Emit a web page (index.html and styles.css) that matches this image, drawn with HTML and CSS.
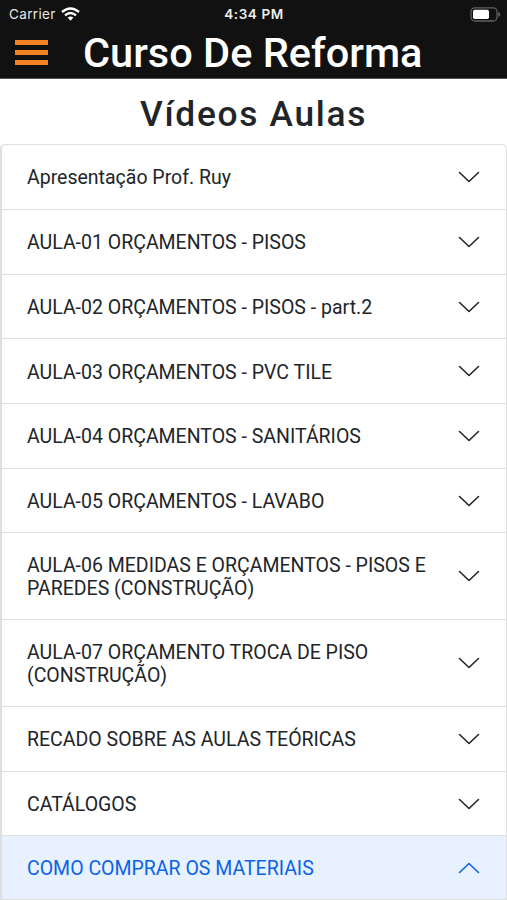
FILE: index.html
```html
<!DOCTYPE html>
<html lang="pt-BR">
<head>
<meta charset="utf-8">
<title>Curso De Reforma</title>
<link rel="stylesheet" href="styles.css">
</head>
<body>
<header class="top">
  <div class="status">
    <div class="carrier"><span>Carrier</span>
      <svg width="19" height="14" viewBox="0 0 19 14" fill="none" stroke="#fff" stroke-width="2.4"><path d="M1 5Q9.5-2.2 18 5M4 8.4Q9.500 3.800 15 8.400"/><path d="M9.500 13.700L6.600 10.600Q9.500 8.300 12.400 10.600Z" fill="#fff" stroke="none"/></svg>
    </div>
    <time class="clock">4:34 PM</time>
    <svg class="battery" width="31" height="15" viewBox="0 0 31 15"><rect x="1" y=".8" width="26" height="13.2" rx="3.8" fill="none" stroke="#606060" stroke-width="1.3"/><rect x="3" y="2.800" width="16" height="9.200" rx="1.800" fill="#fff"/><path d="M28.300 5Q30.300 5.500 30.300 7.400T28.300 9.800Z" fill="#606060"/></svg>
  </div>
  <div class="bar">
    <div class="menu"><i></i><i></i><i></i></div>
    <h1>Curso De Reforma</h1>
  </div>
</header>
<h2>Vídeos Aulas</h2>
<main class="accordion">
  <div class="item"><span>Apresentação Prof. Ruy</span><svg class="chev" viewBox="0 0 22 12"><path d="M1.5 1.5L11 10.5L20.5 1.5"/></svg></div>
  <div class="item"><span>AULA-01 ORÇAMENTOS - PISOS</span><svg class="chev" viewBox="0 0 22 12"><path d="M1.5 1.5L11 10.5L20.5 1.5"/></svg></div>
  <div class="item"><span>AULA-02 ORÇAMENTOS - PISOS - part.2</span><svg class="chev" viewBox="0 0 22 12"><path d="M1.5 1.5L11 10.5L20.5 1.5"/></svg></div>
  <div class="item"><span>AULA-03 ORÇAMENTOS - PVC TILE</span><svg class="chev" viewBox="0 0 22 12"><path d="M1.5 1.5L11 10.5L20.5 1.5"/></svg></div>
  <div class="item"><span>AULA-04 ORÇAMENTOS - SANITÁRIOS</span><svg class="chev" viewBox="0 0 22 12"><path d="M1.5 1.5L11 10.5L20.5 1.5"/></svg></div>
  <div class="item"><span>AULA-05 ORÇAMENTOS - LAVABO</span><svg class="chev" viewBox="0 0 22 12"><path d="M1.5 1.5L11 10.5L20.5 1.5"/></svg></div>
  <div class="item"><span>AULA-06 MEDIDAS E ORÇAMENTOS - PISOS E<br>PAREDES (CONSTRUÇÃO)</span><svg class="chev" viewBox="0 0 22 12"><path d="M1.5 1.5L11 10.5L20.5 1.5"/></svg></div>
  <div class="item"><span>AULA-07 ORÇAMENTO TROCA DE PISO<br>(CONSTRUÇÃO)</span><svg class="chev" viewBox="0 0 22 12"><path d="M1.5 1.5L11 10.5L20.5 1.5"/></svg></div>
  <div class="item"><span>RECADO SOBRE AS AULAS TEÓRICAS</span><svg class="chev" viewBox="0 0 22 12"><path d="M1.5 1.5L11 10.5L20.5 1.5"/></svg></div>
  <div class="item"><span>CATÁLOGOS</span><svg class="chev" viewBox="0 0 22 12"><path d="M1.5 1.5L11 10.5L20.5 1.5"/></svg></div>
  <div class="item open"><span>COMO COMPRAR OS MATERIAIS</span><svg class="chev" viewBox="0 0 22 12"><path d="M1.5 10.5L11 1.5L20.5 10.5"/></svg></div>
</main>
</body>
</html>
```
FILE: styles.css
```css
* { box-sizing: border-box; }
html { overflow: hidden; }
body { margin: 0; width: 507px; height: 900px; overflow: hidden; background: #fff; color: #212529; font-family: Roboto, "Liberation Sans", sans-serif; }
.top { height: 79px; background: #111; color: #fff; border-bottom: 1px solid #555; }
.status { height: 27px; padding: 0 6px 0 9px; display: grid; grid-template-columns: 1fr auto 1fr; align-items: center; font: 13.5px/27px Inter, sans-serif; }
.carrier { display: flex; align-items: center; gap: 5px; color: #e8e8e8; letter-spacing: .35px; }
.carrier span { padding-top: 1px; }
.clock { font-weight: 600; letter-spacing: .6px; padding-top: 1px; color: #eee; margin-right: 2px; }
.battery { justify-self: end; }
.bar { height: 51px; display: flex; align-items: center; padding-left: 15px; }
.menu { width: 33px; display: flex; flex-direction: column; gap: 5px; }
.menu i { height: 5px; background: #f58220; }
h1 { margin: 0 0 0 35px; font-size: 41.5px; line-height: 52px; font-weight: 500; white-space: nowrap; }
h2 { margin: 0; height: 65.3px; text-align: center; font-size: 35.3px; line-height: 70px; font-weight: 500; letter-spacing: 1.7px; white-space: nowrap; }
.accordion { border: 1px solid #dfdfdf; border-left: 2px solid #dfdfdf; border-radius: 5px 5px 0 0; }
.item { display: flex; justify-content: space-between; align-items: center; min-height: 64.7px; padding: 19.6px 26px 19.6px 25px; font-size: 19.5px; line-height: 23.3px; border-bottom: 1px solid #dfdfdf; white-space: nowrap; }
.item span { padding-top: 1px; margin-bottom: -1px; }
.chev { width: 22px; height: 12px; fill: none; stroke: currentColor; stroke-width: 1.6; stroke-linecap: round; stroke-linejoin: round; }
.open { color: #0c63e4; background: #e7f1ff; min-height: 63.7px; }
```
